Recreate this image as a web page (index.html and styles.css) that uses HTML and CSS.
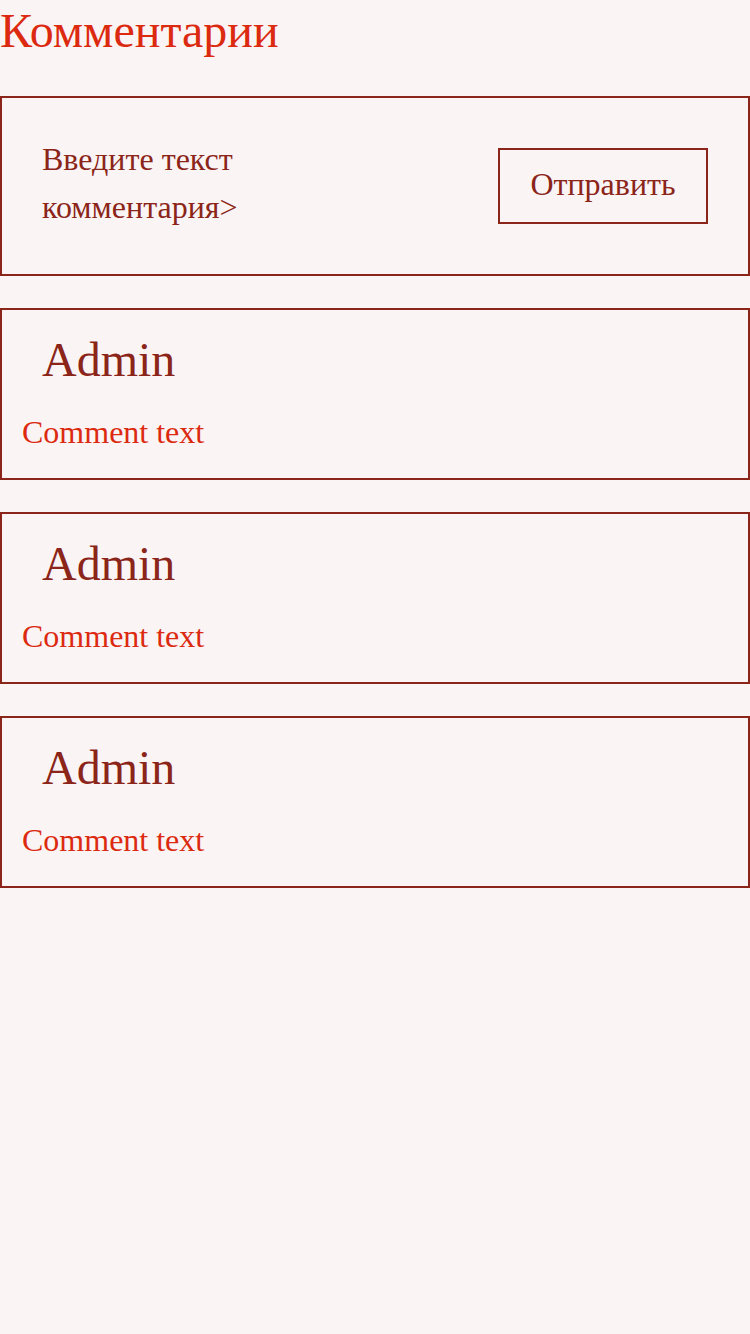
FILE: index.html
```html
<!DOCTYPE html>
<html lang="ru">
<head>
<meta charset="utf-8">
<title>Комментарии</title>
<link rel="stylesheet" href="styles.css">
</head>
<body>
<h1 class="title">Комментарии</h1>
<form class="comment-form">
  <div class="input-text">Введите текст<br>комментария&gt;</div>
  <button type="button" class="send">Отправить</button>
</form>
<div class="comment">
  <div class="author">Admin</div>
  <div class="text">Comment text</div>
</div>
<div class="comment">
  <div class="author">Admin</div>
  <div class="text">Comment text</div>
</div>
<div class="comment">
  <div class="author">Admin</div>
  <div class="text">Comment text</div>
</div>
</body>
</html>
```

FILE: styles.css
```css
html, body {
  margin: 0;
  padding: 0;
  background: #faf4f4;
  font-family: "Liberation Serif", "Times New Roman", serif;
}
.title {
  margin: 0;
  font-weight: normal;
  font-size: 48px;
  line-height: 56px;
  color: #dc2a10;
  padding-top: 3px;
  height: 93px;
}
.comment-form {
  margin: 0 0 32px;
  border: 2px solid #8b2519;
  height: 176px;
  display: flex;
  align-items: center;
  justify-content: space-between;
  padding: 0 40px;
}
.input-text {
  font-size: 32px;
  line-height: 48px;
  color: #8b2519;
  padding-bottom: 6px;
}
.send {
  font-family: inherit;
  font-size: 32px;
  line-height: 37px;
  color: #8b2519;
  background: transparent;
  border: 2px solid #8b2519;
  width: 210px;
  height: 76px;
  padding: 0 0 4px;
}
.comment {
  border: 2px solid #8b2519;
  height: 168px;
  margin-bottom: 32px;
}
.author {
  font-size: 48px;
  line-height: 56px;
  color: #8b2519;
  padding: 22px 0 0 40px;
}
.text {
  font-size: 32px;
  line-height: 37px;
  color: #dc2a10;
  padding: 26px 0 0 20px;
}
```
